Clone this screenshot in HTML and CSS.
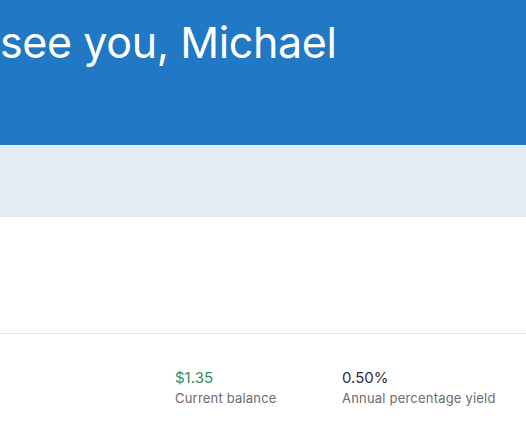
FILE: index.html
```html
<!DOCTYPE html>
<html lang="en">
<head>
  <meta charset="UTF-8">
  <meta name="viewport" content="width=device-width, initial-scale=1">
  <title>Savings</title>
  <link rel="stylesheet" href="styles.css">
</head>
<body>
  <div class="hero">
    <h1 class="greeting">see you, Michael</h1>
  </div>

  <div class="subbar"></div>

  <div class="account-head"></div>

  <div class="account-stats">
    <div class="stat">
      <div class="stat-value money">$1.35</div>
      <div class="stat-label">Current balance</div>
    </div>
    <div class="stat">
      <div class="stat-value">0.50%</div>
      <div class="stat-label">Annual percentage yield</div>
    </div>
  </div>
</body>
</html>
```

FILE: styles.css
```css
body {
  font-family: Inter, 'Liberation Sans', sans-serif;
  margin: 0;
  padding: 0;
  background: #fff;
  overflow: hidden;
}

.hero {
  background: #2178c4;
  height: 145px;
  overflow: hidden;
}

.greeting {
  margin: 0;
  padding-top: 14px;
  font-size: 43px;
  font-weight: normal;
  color: #fff;
  line-height: 56px;
  letter-spacing: -0.4px;
  white-space: nowrap;
}

.subbar {
  background: #e5ebf2;
  height: 72px;
}

.account-head {
  height: 116px;
  border-bottom: 1px solid #e8e8e8;
}

.account-stats {
  display: flex;
  padding: 35px 0 0 175px;
}

.stat {
  width: 167px;
}

.stat-value {
  font-size: 15px;
  color: #2d2d38;
  line-height: 18px;
}

.stat-value.money {
  color: #3a8a5c;
}

.stat-label {
  font-size: 13px;
  color: #6b6b70;
  margin-top: 3px;
  line-height: 16px;
  letter-spacing: 0.2px;
}
```
